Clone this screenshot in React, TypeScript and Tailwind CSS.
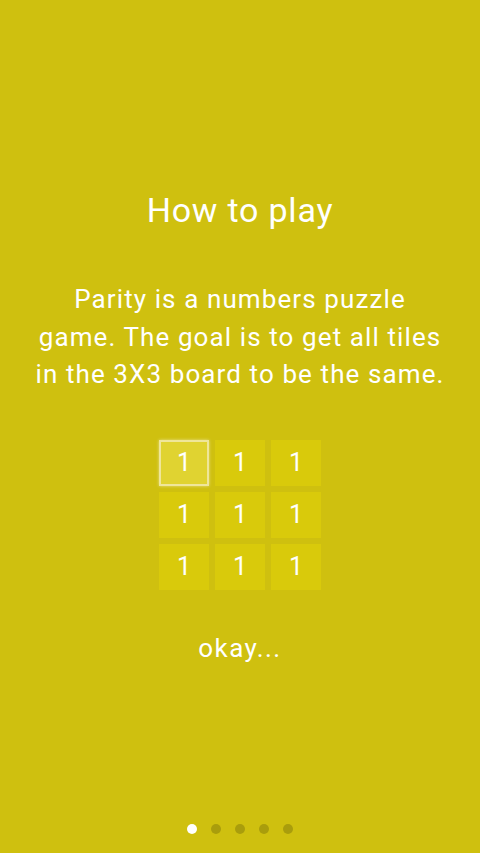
import React from "react";

const tiles = [1, 1, 1, 1, 1, 1, 1, 1, 1];

export default function App() {
  return (
    <div
      className="flex flex-col items-center h-[853px] w-full bg-[#cfc00f] text-white overflow-hidden"
      style={{ fontFamily: "Roboto, 'Noto Sans', sans-serif" }}
    >
      {/* title */}
      <h1 className="pt-[190px] text-[34px] leading-[40px] font-normal tracking-[0.8px]">How to play</h1>

      {/* description */}
      <p className="mt-[51px] text-center text-[26px] leading-[37.5px] font-normal tracking-[1.1px]">
        Parity is a numbers puzzle
        <br />
        game. The goal is to get all tiles
        <br />
        in the 3X3 board to be the same.
      </p>

      {/* board */}
      <div className="mt-[46px] grid grid-cols-3 gap-[6px]">
        {tiles.map((n, i) => (
          <div
            key={i}
            className={
              i === 0
                ? "w-[50px] h-[46px] flex items-center justify-center bg-[#e0d331] border-2 border-[#efe69a] shadow-[0_0_3px_rgba(255,255,255,0.5)] text-[25px] font-normal"
                : "w-[50px] h-[46px] flex items-center justify-center bg-[#d9ca0b] text-[25px] font-normal"
            }
          >
            {n}
          </div>
        ))}
      </div>

      {/* button */}
      <button className="mt-[42px] text-[26px] leading-[32px] font-normal tracking-[1.4px]">okay...</button>

      {/* page dots */}
      <div className="mt-auto pb-[19px] flex gap-[14px]">
        <span className="w-[10px] h-[10px] rounded-full bg-white" />
        <span className="w-[10px] h-[10px] rounded-full bg-[#a99d0c]" />
        <span className="w-[10px] h-[10px] rounded-full bg-[#a99d0c]" />
        <span className="w-[10px] h-[10px] rounded-full bg-[#a99d0c]" />
        <span className="w-[10px] h-[10px] rounded-full bg-[#a99d0c]" />
      </div>
    </div>
  );
}
